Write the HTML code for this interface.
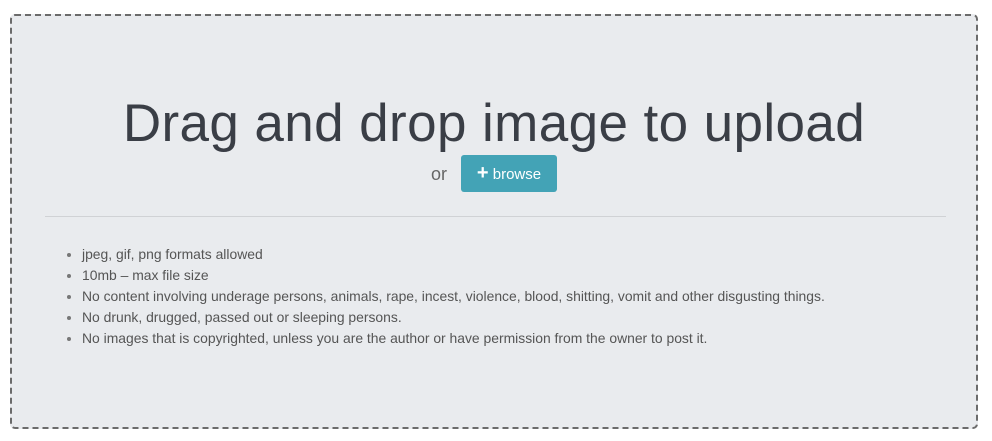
<!DOCTYPE html>
<html><head><style>
body{margin:0;background:#fff;font-family:"Liberation Sans",sans-serif;}
.box{position:absolute;left:10px;top:14px;width:964px;height:411px;border:2px dashed #6b6b6b;border-radius:5px;background:#e9ebee;}
h1{position:absolute;left:0;width:100%;top:73px;margin:0;text-align:center;font-weight:300;font-size:53px;color:#3a3e46;line-height:70px;letter-spacing:0.4px;}
.or{position:absolute;left:419px;top:148px;font-size:18px;color:#666;}
.btn{position:absolute;left:449px;top:139px;width:96px;height:37px;background:#43a3b6;border-radius:3px;color:#fff;font-size:15px;line-height:37px;text-align:center;}
.btn b{font-size:20px;}
hr{position:absolute;left:33px;top:200px;width:901px;margin:0;border:0;border-top:1px solid #d0d2d5;}
ul{position:absolute;left:38px;top:228px;margin:0;padding-left:32px;font-size:13.9px;color:#555;line-height:21px;}
li::marker{color:#777;}
</style></head><body>
<div class="box">
<h1>Drag and drop image to upload</h1>
<div class="or">or</div>
<div class="btn"><b>+</b> browse</div>
<hr>
<ul>
<li>jpeg, gif, png formats allowed</li>
<li>10mb – max file size</li>
<li>No content involving underage persons, animals, rape, incest, violence, blood, shitting, vomit and other disgusting things.</li>
<li>No drunk, drugged, passed out or sleeping persons.</li>
<li>No images that is copyrighted, unless you are the author or have permission from the owner to post it.</li>
</ul>
</div>
</body></html>
